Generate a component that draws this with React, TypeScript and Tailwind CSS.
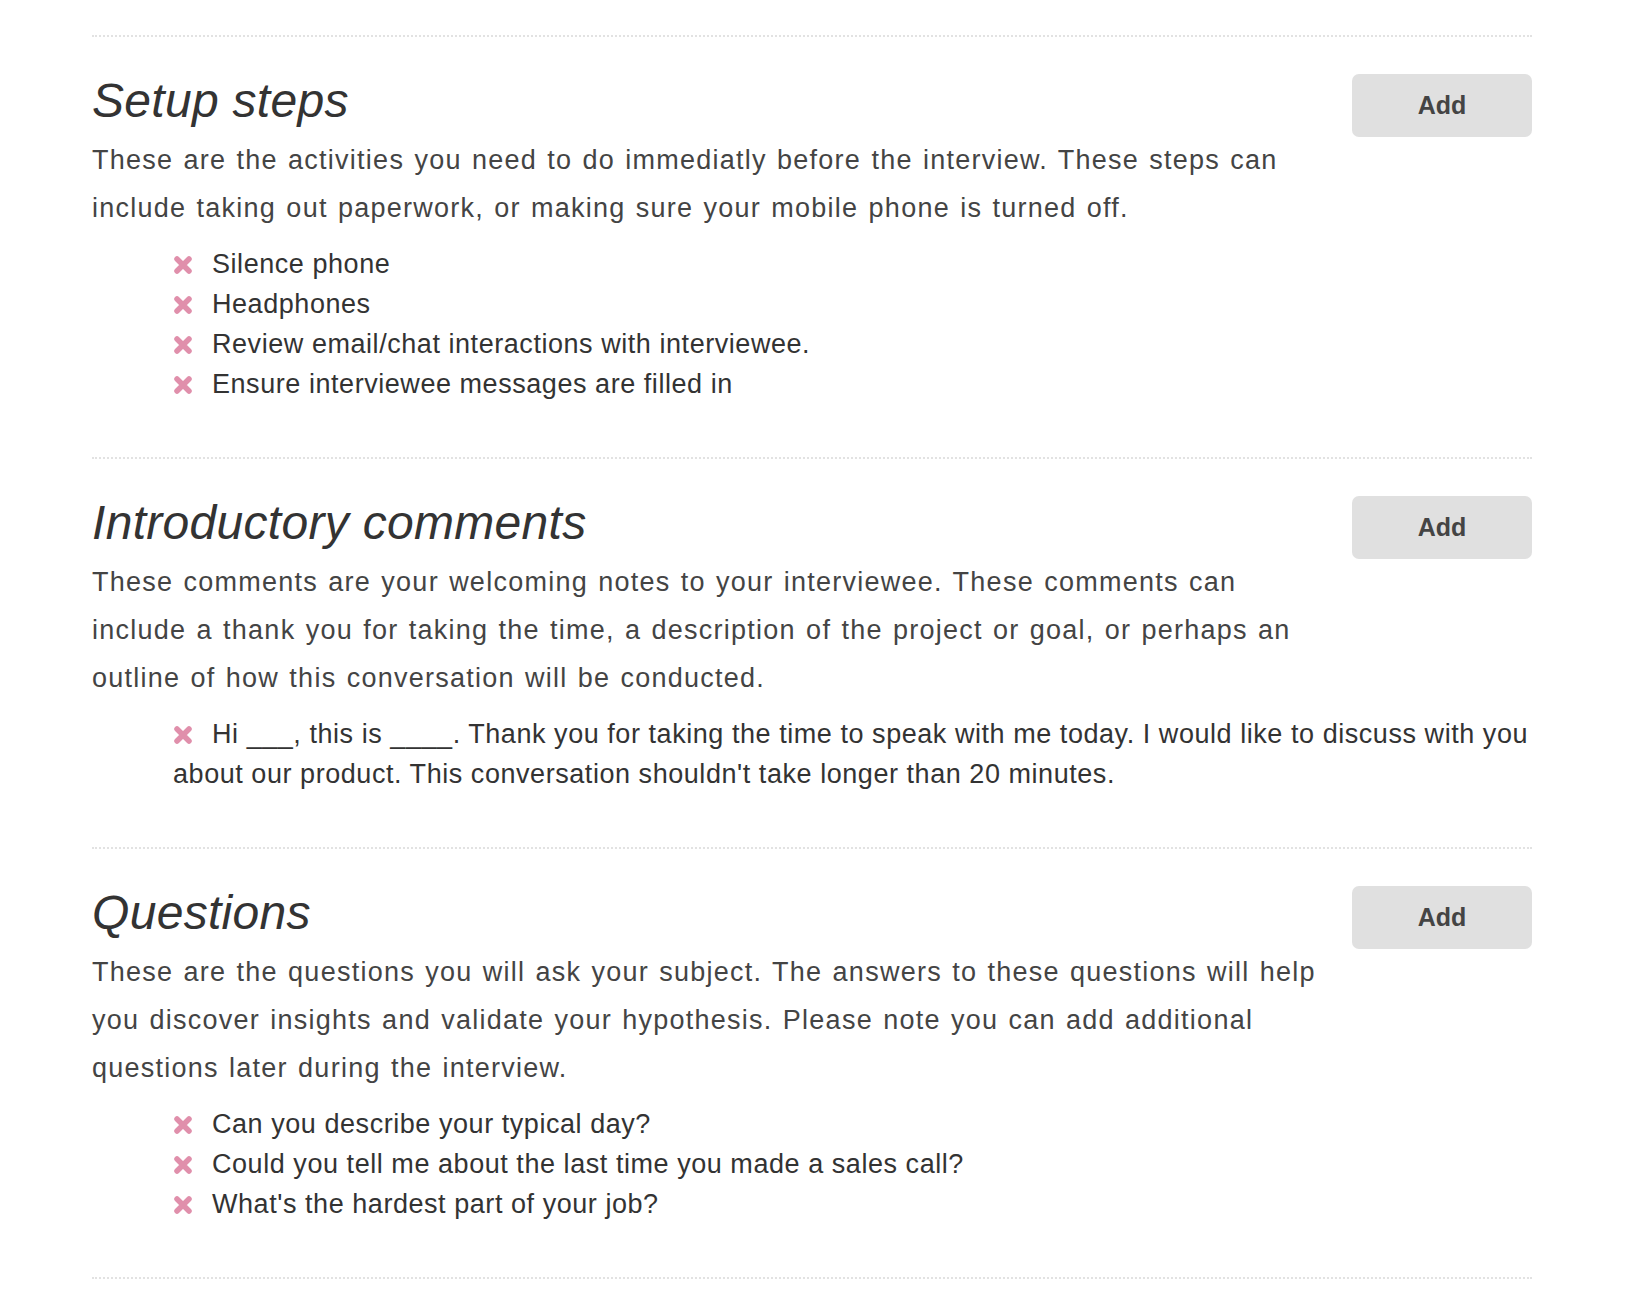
import React from 'react';

interface Section {
  title: string;
  description: string;
  items: string[];
}

const SECTIONS: Section[] = [
  {
    title: 'Setup steps',
    description:
      'These are the activities you need to do immediatly before the interview. These steps can include taking out paperwork, or making sure your mobile phone is turned off.',
    items: [
      'Silence phone',
      'Headphones',
      'Review email/chat interactions with interviewee.',
      'Ensure interviewee messages are filled in',
    ],
  },
  {
    title: 'Introductory comments',
    description:
      'These comments are your welcoming notes to your interviewee. These comments can include a thank you for taking the time, a description of the project or goal, or perhaps an outline of how this conversation will be conducted.',
    items: [
      "Hi ___, this is ____. Thank you for taking the time to speak with me today. I would like to discuss with you about our product. This conversation shouldn't take longer than 20 minutes.",
    ],
  },
  {
    title: 'Questions',
    description:
      'These are the questions you will ask your subject. The answers to these questions will help you discover insights and validate your hypothesis. Please note you can add additional questions later during the interview.',
    items: [
      'Can you describe your typical day?',
      'Could you tell me about the last time you made a sales call?',
      "What's the hardest part of your job?",
    ],
  },
];

function RemoveIcon() {
  return (
    <svg
      width="20"
      height="20"
      viewBox="0 0 20 20"
      className="inline-block align-[-2px] mr-[19px] cursor-pointer"
      aria-hidden="true"
    >
      <path d="M4 4 L16 16 M16 4 L4 16" stroke="#e08fab" strokeWidth="5.5" strokeLinecap="round" fill="none" />
    </svg>
  );
}

function SectionBlock({ section }: { section: Section }) {
  return (
    <section className="border-t-2 border-dotted border-[#e2e2e2] pt-[37px] pb-[53px]">
      {/* Header: title + description, Add button */}
      <div className="flex items-start justify-between">
        <div className="w-[1240px]">
          <h2 className="text-[48px] leading-[53px] italic font-normal tracking-[0.3px] text-[#333]">{section.title}</h2>
          <p className="mt-[9px] text-[27px] leading-[48px] tracking-[1.25px] [word-spacing:1.5px] text-[#444]">
            {section.description}
          </p>
        </div>
        <button className="shrink-0 w-[180px] h-[63px] rounded-[7px] bg-[#e0e0e0] text-[25px] font-bold text-[#444]">
          Add
        </button>
      </div>

      {/* Items */}
      <ul className="mt-[12px] pl-[81px]">
        {section.items.map((item, i) => (
          <li key={i} className="text-[27px] leading-[40px] tracking-[0.55px] text-[#333]">
            <RemoveIcon />
            {item}
          </li>
        ))}
      </ul>
    </section>
  );
}

export default function App() {
  return (
    <div className="min-h-screen bg-white pt-[35px] pl-[92px]" style={{ fontFamily: '"Liberation Sans", Arial, sans-serif' }}>
      <div className="w-[1440px]">
        {SECTIONS.map((s) => (
          <SectionBlock key={s.title} section={s} />
        ))}
        <div className="border-t-2 border-dotted border-[#e2e2e2]" />
      </div>
    </div>
  );
}
